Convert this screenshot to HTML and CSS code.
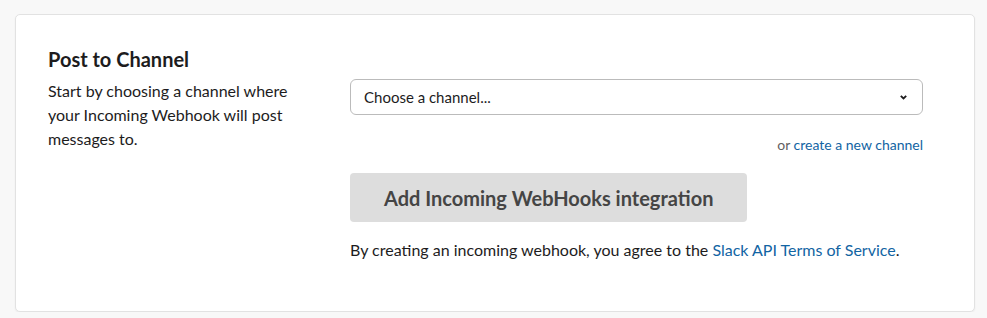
FILE: index.html
```html
<!DOCTYPE html>
<html lang="en">
<head>
    <meta charset="UTF-8">
    <title>Incoming WebHooks</title>
    <link rel="stylesheet" href="styles.css">
</head>
<body>
    <div class="card">
        <h3 class="card-title">Post to Channel</h3>
        <p class="card-desc">Start by choosing a channel where your Incoming Webhook will post messages to.</p>

        <div class="form-col">
            <div class="channel-select">
                <span>Choose a channel...</span>
                <svg class="chevron" width="7" height="5" viewBox="0 0 7 5">
                    <path d="M0.8 0.8 L3.5 3.5 L6.2 0.8" fill="none" stroke="#1d1c1d" stroke-width="1.8"/>
                </svg>
            </div>
            <div class="new-channel">or <a href="#">create a new channel</a></div>
            <button class="add-btn">Add Incoming WebHooks integration</button>
            <p class="terms">By creating an incoming webhook, you agree to the <a href="#">Slack API Terms of Service</a>.</p>
        </div>
    </div>
</body>
</html>
```

FILE: styles.css
```css
body {
    margin: 0;
    padding: 14px 0 0 15px;
    background: #f8f8f8;
    font-family: Lato, "Open Sans", sans-serif;
    color: #1d1c1d;
}
a {
    color: #1264a3;
    text-decoration: none;
}
.card {
    width: 960px;
    box-sizing: border-box;
    background: #fff;
    border: 1px solid #e2e2e2;
    border-radius: 5px;
    box-shadow: 0 1px 2px rgba(0, 0, 0, 0.06);
    padding: 32px 0 49px 32px;
    display: grid;
    grid-template-columns: 258px 573px;
    column-gap: 44px;
}
.card-title {
    grid-column: 1;
    margin: 0 0 8px;
    font-size: 20px;
    line-height: 24px;
    font-weight: 700;
}
.card-desc {
    grid-column: 1;
    grid-row: 2;
    margin: 0;
    font-size: 16px;
    line-height: 24px;
}
.form-col {
    grid-column: 2;
    grid-row: 2;
    display: flex;
    flex-direction: column;
    align-items: flex-start;
}
.channel-select {
    align-self: stretch;
    height: 36px;
    box-sizing: border-box;
    border: 1px solid #bbbbbb;
    border-radius: 6px;
    padding: 0 15px 0 13px;
    display: flex;
    align-items: center;
    justify-content: space-between;
    font-size: 15px;
}
.new-channel {
    align-self: flex-end;
    margin-top: 20px;
    font-size: 14px;
    line-height: 20px;
    color: #616061;
}
.add-btn {
    margin-top: 18px;
    height: 49px;
    padding: 0 34px;
    border: none;
    border-radius: 4px;
    background: #dddddd;
    color: #454545;
    font-family: inherit;
    font-size: 20px;
    font-weight: 700;
}
.terms {
    margin: 16px 0 0;
    font-size: 16px;
    line-height: 24px;
}
```
